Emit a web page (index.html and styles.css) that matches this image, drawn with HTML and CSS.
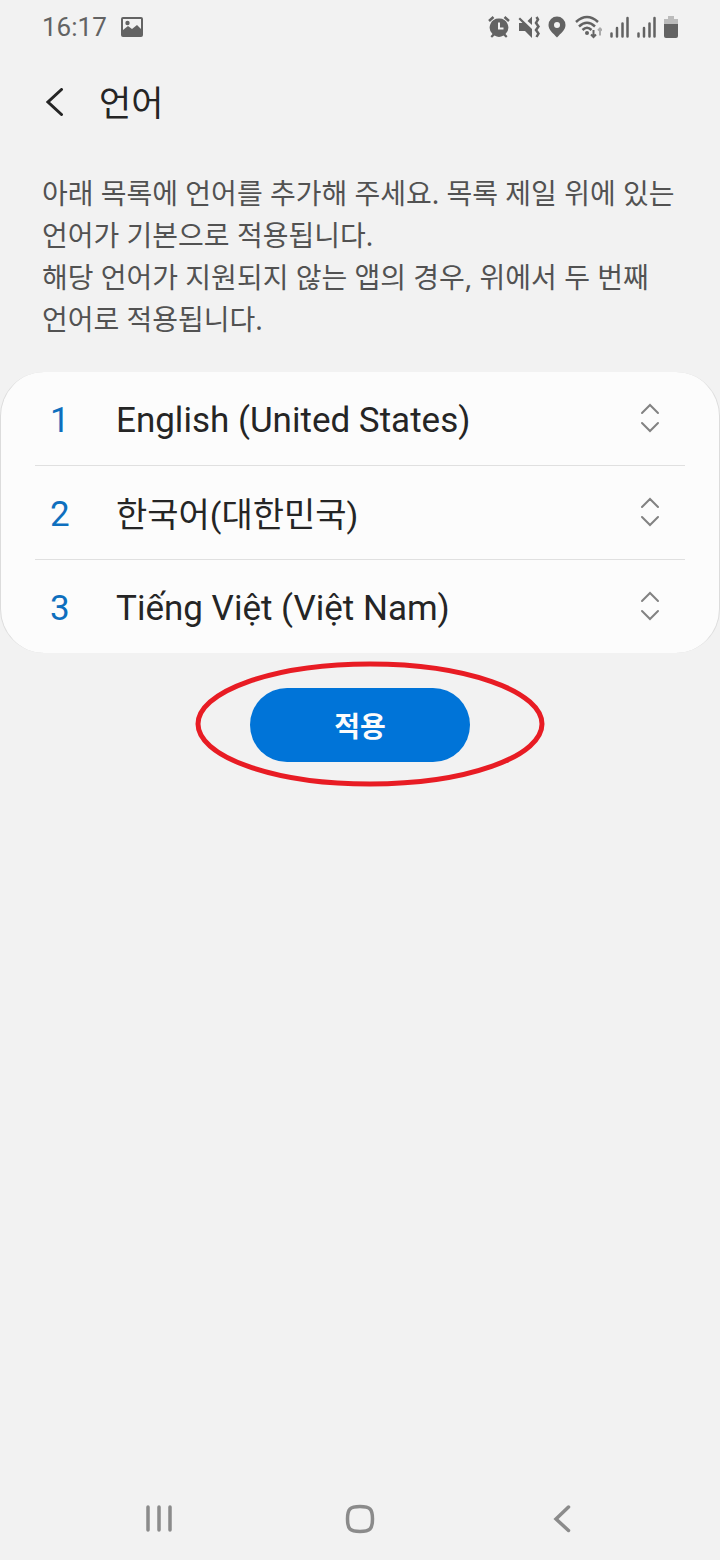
FILE: index.html
```html
<!DOCTYPE html>
<html lang="ko">
<head>
  <meta charset="UTF-8" />
  <meta name="viewport" content="width=device-width, initial-scale=1.0" />
  <title>언어</title>
  <link rel="stylesheet" href="styles.css">
</head>
<body>

  <!-- Status bar -->
  <div class="status-bar">
    <span class="time">16:17</span>
    <svg class="photo" width="22" height="20" viewBox="0 0 22 20">
      <path fill-rule="evenodd" d="M2 0h18q2 0 2 2v16q0 2-2 2H2q-2 0-2-2V2Q0 0 2 0zM2 2v11l5-4 4 3 5-4 4 4V2z" />
      <circle cx="6.500" cy="6" r="2.200" />
    </svg>
    <div class="status-icons">
      <svg width="22" height="22" viewBox="0 0 22 22">
        <path fill-rule="evenodd" d="M11 2.500a9 9 0 0 1 6.500 15.500l2 2.300-1.500 1.500-2.500-2.200a9 9 0 0 1-9 0L4 21.800l-1.500-1.500 2-2.300A9 9 0 0 1 11 2.500zM10 6.500v7h5.500v-2H12v-5z" />
        <path class="line" d="M1 5l4.500-4M21 5l-4.500-4" />
      </svg>
      <svg width="22" height="22" viewBox="0 0 22 22">
        <path d="M1 7h4l9 8.500V22l-7-7H1zM9.500 5L14 .5v8.500zM2 1.500l12 11.500v3.500L.5 3z" />
        <path class="line" d="M18.500 1l1.500 2.500-2 3.500 2.500 3.500-2.500 3.500 2.500 3.500-2 3.500" />
      </svg>
      <svg class="pin" width="18" height="22" viewBox="0 0 18 22">
        <path fill-rule="evenodd" d="M9 .5a8.500 8.500 0 0 1 8.500 8.500c0 5-4.500 8-8.500 12.500C5 17 .5 14 .5 9A8.500 8.500 0 0 1 9 .5zm0 5.500a3 3 0 1 0 0 6 3 3 0 0 0 0-6z" />
      </svg>
      <svg class="wifi" width="28" height="24" viewBox="0 0 28 24">
        <path class="line" d="M2 7q11-10 22 0M5 11.500q8-7.500 16 0M8.500 15q4.500-4.500 9 0" />
        <circle cx="13" cy="18" r="2" />
        <path class="line thin" d="M19.500 15v7M17 19.500l2.500 2.500 2.500-2.500" />
        <path class="line thin faint" d="M26 20.500v-7M24 15.500l2-2 2 2" />
      </svg>
      <svg class="signal" width="19" height="22" viewBox="0 0 19 22">
        <path class="bars" d="M1.500 20.500v-3M7 20.500V12M12.500 20.500V7.500M17.500 20.500V2" />
      </svg>
      <svg class="signal" width="19" height="22" viewBox="0 0 19 22">
        <path class="bars" d="M1.500 20.500v-3M7 20.500V12M12.500 20.500V7.500M17.500 20.500V2" />
      </svg>
      <svg width="14" height="22" viewBox="0 0 14 22">
        <path class="empty" d="M0 8V3h4V0h6v3h4v5z" />
        <path d="M0 8h14v12q0 2-2 2H2q-2 0-2-2z" />
      </svg>
    </div>
  </div>

  <header>
    <button class="back" aria-label="뒤로">
      <svg width="18" height="28" viewBox="0 0 18 28">
        <path d="M15.500 1.500L2 14l13.500 12.500" />
      </svg>
    </button>
    <h1>언어</h1>
  </header>

  <main>
    <p>아래 목록에 언어를 추가해 주세요. 목록 제일 위에 있는 언어가 기본으로 적용됩니다.<br>해당 언어가 지원되지 않는 앱의 경우, 위에서 두 번째 언어로 적용됩니다.</p>

    <ol class="languages">
      <li>
        <span class="number">1</span>
        <span class="name">English (United States)</span>
        <button class="sort" aria-label="English 순서 변경">
          <svg width="20" height="30" viewBox="0 0 20 30"><path d="M2 10l8-8 8 8M2 20l8 8 8-8" /></svg>
        </button>
      </li>
      <li>
        <span class="number">2</span>
        <span class="name korean">한국어(대한민국)</span>
        <button class="sort" aria-label="한국어 순서 변경">
          <svg width="20" height="30" viewBox="0 0 20 30"><path d="M2 10l8-8 8 8M2 20l8 8 8-8" /></svg>
        </button>
      </li>
      <li>
        <span class="number">3</span>
        <span class="name">Tiếng Việt (Việt Nam)</span>
        <button class="sort" aria-label="Tiếng Việt 순서 변경">
          <svg width="20" height="30" viewBox="0 0 20 30"><path d="M2 10l8-8 8 8M2 20l8 8 8-8" /></svg>
        </button>
      </li>
    </ol>

    <div class="apply-area">
      <button class="apply">적용</button>
      <!-- Red ring around the button -->
      <svg class="ring" width="350" height="126" viewBox="0 0 350 126">
        <ellipse cx="175" cy="63" rx="172" ry="60" />
      </svg>
    </div>
  </main>

  <!-- Navigation bar -->
  <nav>
    <button aria-label="최근 앱">
      <svg width="30" height="30" viewBox="0 0 30 30"><path d="M4 3v23M15 3v23M26 3v23" /></svg>
    </button>
    <button aria-label="홈">
      <svg width="30" height="30" viewBox="0 0 30 30"><path d="M15 2.500c10 0 12.500 2.500 12.500 12.500S25 27.500 15 27.500 2.500 25 2.500 15 5 2.500 15 2.500z" /></svg>
    </button>
    <button aria-label="뒤로 가기">
      <svg width="30" height="30" viewBox="0 0 30 30"><path d="M22.500 3L10 15l12.500 11.500" /></svg>
    </button>
  </nav>

</body>
</html>
```
FILE: styles.css
```css
* {
  box-sizing: border-box;
  margin: 0;
  padding: 0;
}

body {
  display: flex;
  flex-direction: column;
  min-height: 100vh;
  background-color: #f2f2f2;
  color: #252525;
  font-family: Roboto, 'Noto Sans CJK KR', sans-serif;
}

button {
  border: none;
  background: none;
  font-family: inherit;
  cursor: pointer;
}

svg {
  display: block;
}

/* Status bar */
.status-bar {
  display: flex;
  align-items: center;
  height: 54px;
  padding: 0 42px;
  color: #636363;
  fill: #636363;
}

.time {
  font-size: 26px;
}

.photo {
  margin-left: 14px;
}

.status-icons {
  display: flex;
  align-items: center;
  gap: 8px;
  margin-left: auto;
}

.line,
.bars {
  fill: none;
  stroke: #636363;
  stroke-width: 2.5;
}

.bars {
  stroke-linecap: round;
}

.thin {
  stroke-width: 2;
}

.faint {
  stroke: #aaa;
}

.empty {
  fill: #bbb;
}

/* Header */
header {
  display: flex;
  align-items: center;
  gap: 35px;
  height: 96px;
  padding: 0 46px;
}

.back path {
  fill: none;
  stroke: #252525;
  stroke-width: 3;
  stroke-linecap: round;
}

h1 {
  padding-top: 5px;
  font-size: 35px;
  font-weight: 400;
  line-height: 48px;
}

main {
  flex: 1;
}

p {
  padding: 22px 42px 32px;
  color: #525252;
  font-family: 'Noto Sans', 'Noto Sans CJK KR', sans-serif;
  font-size: 28px;
  line-height: 42px;
  word-break: keep-all;
}

/* Language list */
.languages {
  border: 1px solid #dcdcdc;
  border-width: 0 1px;
  border-radius: 44px;
  background-color: #fcfcfc;
  list-style: none;
}

.languages li {
  display: flex;
  align-items: center;
  height: 94px;
  margin: 0 34px;
  padding: 3px 25px 0 15px;
  border-bottom: 1px solid #e0e0e0;
  font-size: 35px;
}

.languages li:last-child {
  height: 93px;
  border-bottom: none;
}

.number {
  width: 66px;
  color: #0e6fbe;
}

.name {
  flex: 1;
}

.korean {
  padding-bottom: 3px;
  font-size: 34px;
}

.sort {
  padding-bottom: 4px;
}

.sort path {
  fill: none;
  stroke: #828282;
  stroke-width: 2;
  stroke-linecap: round;
}

/* Apply button */
.apply-area {
  position: relative;
  display: flex;
  justify-content: center;
  padding-top: 35px;
}

.apply {
  width: 220px;
  height: 74px;
  border-radius: 37px;
  background-color: #0074d8;
  color: #fcfcfc;
  font-size: 28px;
  font-weight: 700;
}

.ring {
  position: absolute;
  top: 8px;
  left: calc(50% - 165px);
  pointer-events: none;
}

.ring ellipse {
  fill: none;
  stroke: #e81c24;
  stroke-width: 5;
}

/* Navigation bar */
nav {
  display: flex;
  justify-content: center;
  gap: 171px;
  padding: 26px 0;
}

nav path {
  fill: none;
  stroke: #8b8b8b;
  stroke-width: 3.5;
  stroke-linecap: round;
}
```
